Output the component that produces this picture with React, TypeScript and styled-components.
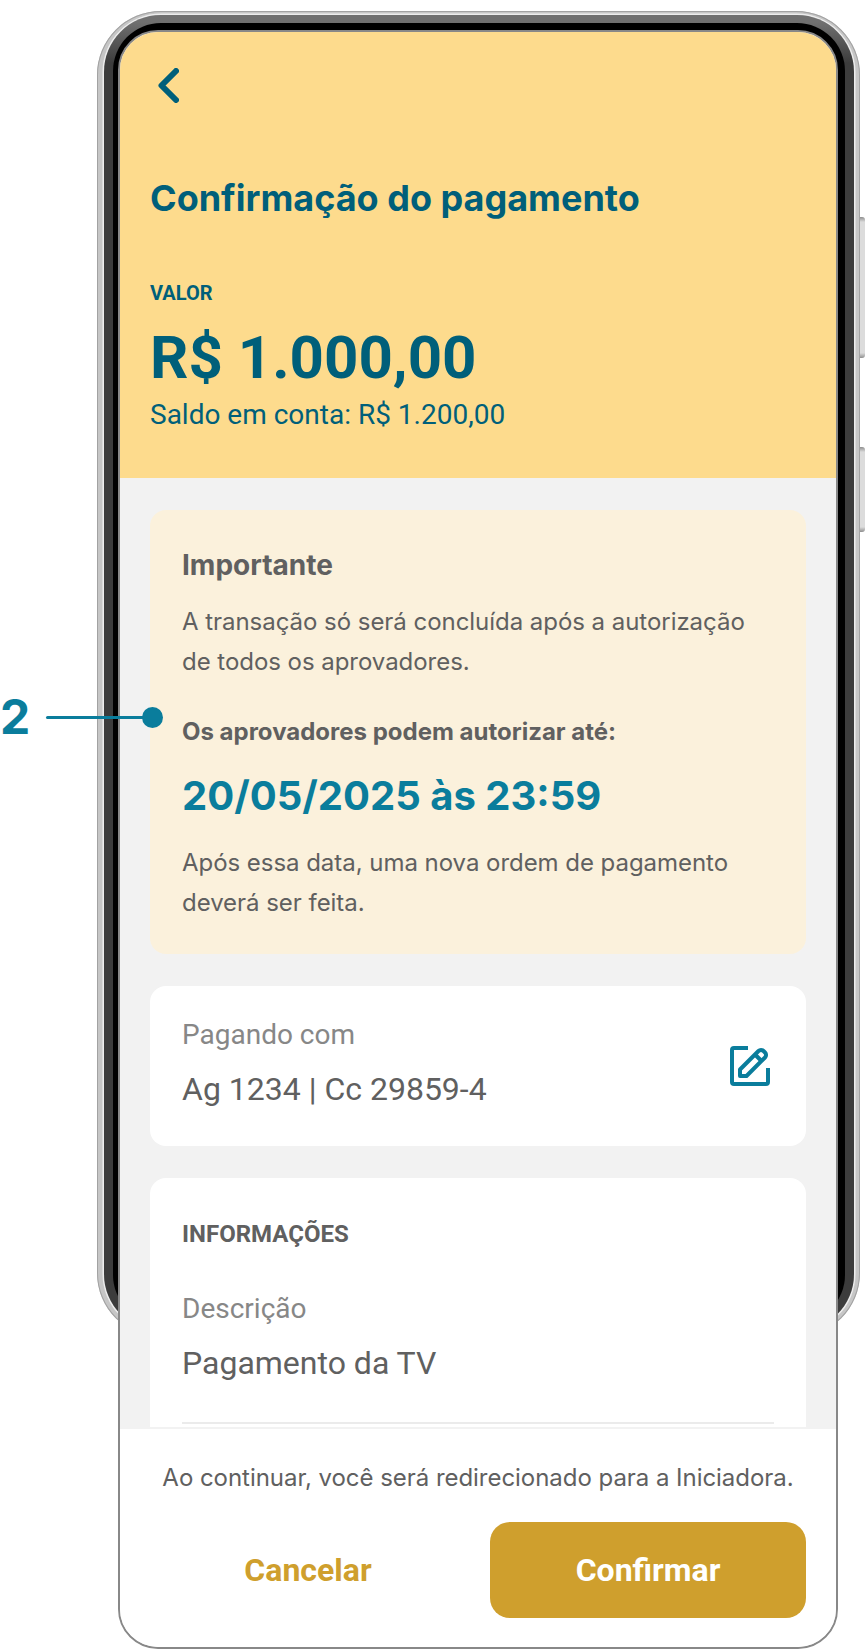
import styled, { createGlobalStyle } from 'styled-components'

const colors = {
  yellow: '#FDDB8D',
  teal: '#005F7A',
  accent: '#0A7D9C',
  gold: '#CF9F2D',
  text: '#606060',
  muted: '#878787',
  cream: '#FBF1DC',
  page: '#F2F2F2',
}

const inter = 'Inter, "Liberation Sans", sans-serif'

const GlobalStyle = createGlobalStyle`
  * { box-sizing: border-box; }
  body {
    margin: 0;
    background: #FFFFFF;
    font-family: Roboto, "Liberation Sans", sans-serif;
  }
`

const Stage = styled.div`
  position: relative;
  width: 866px;
  height: 1650px;
  padding: 30px 0 0 118px;
  overflow: hidden;
  background: #FFFFFF;
`
const PhoneShell = styled.div`
  position: absolute;
  left: 97px;
  top: 11px;
  width: 763px;
  height: 1326px;
  padding: 4px 6px 6px 7px;
  border-radius: 64px;
  background: #C6C6C6;
  box-shadow: inset 0 0 0 1px #A2A2A2;
`
const PhoneBezel = styled.div`
  height: 100%;
  padding: 8px 9px;
  border-radius: 57px;
  background: linear-gradient(180deg, #707070 0, #707070 7px, #3C3C3C 48px);
  box-shadow: 0 0 0 1.5px #EDEDED;
`
const PhoneGlass = styled.div`
  height: 100%;
  border-radius: 48px;
  background: #000000;
`
const SideButton = styled.div<{ $top: number; $height: number }>`
  position: absolute;
  left: 860px;
  top: ${(p) => p.$top}px;
  width: 5px;
  height: ${(p) => p.$height}px;
  border-radius: 0 3px 3px 0;
  background: linear-gradient(180deg, #8E8E8E 0, #DCDCDC 5px, #DCDCDC calc(100% - 5px), #8E8E8E 100%);
`
const Screen = styled.div`
  position: relative;
  display: flex;
  flex-direction: column;
  width: 720px;
  height: 1619px;
  border: 2px solid #888888;
  border-radius: 40px;
  overflow: hidden;
  background: ${colors.page};
`
const Header = styled.header`
  flex: none;
  height: 446px;
  padding: 36px 30px 0;
  background: ${colors.yellow};
  color: ${colors.teal};
`
const BackButton = styled.div`
  display: flex;
  height: 35px;
  margin-bottom: 73px;
  padding-left: 8px;
`
const PageTitle = styled.h1`
  margin: 0 0 61px;
  font-family: ${inter};
  font-size: 36px;
  line-height: 44px;
  font-weight: 700;
`
const AmountLabel = styled.div`
  font-size: 20px;
  line-height: 24px;
  font-weight: 700;
`
const Amount = styled.div`
  margin-top: 21px;
  font-size: 60px;
  line-height: 64px;
  font-weight: 700;
`
const Balance = styled.div`
  margin-top: 9px;
  font-size: 28px;
  line-height: 32px;
`
const Content = styled.main`
  flex: 1;
  min-height: 0;
  overflow: hidden;
  padding: 32px 30px 0;
  display: flex;
  flex-direction: column;
  gap: 32px;
`
const Notice = styled.section`
  flex: none;
  height: 444px;
  padding: 37px 32px 0;
  border-radius: 16px;
  background: ${colors.cream};
  color: ${colors.text};
`
const NoticeTitle = styled.h2`
  margin: 0 0 19px;
  font-family: ${inter};
  font-size: 28px;
  line-height: 36px;
  font-weight: 700;
`
const NoticeText = styled.p`
  margin: 0;
  font-family: ${inter};
  font-size: 24px;
  line-height: 40px;
  letter-spacing: -0.04px;
`
const NoticeStrong = styled.p`
  margin: 34px 0 0;
  font-family: ${inter};
  font-size: 24px;
  line-height: 32px;
  font-weight: 700;
`
const Deadline = styled.div`
  margin: 24px 0 23px;
  font-family: ${inter};
  font-size: 40px;
  line-height: 48px;
  font-weight: 700;
  color: ${colors.accent};
`
const Card = styled.section`
  flex: none;
  padding: 38px 32px 32px;
  border-radius: 16px;
  background: #FFFFFF;
`
const AccountCard = styled(Card)`
  display: flex;
  align-items: center;
  justify-content: space-between;
  height: 160px;
  padding: 0 36px 0 32px;
`
const AccountInfo = styled.div`
  margin-bottom: 6px;
`
const FieldLabel = styled.div`
  font-size: 28px;
  line-height: 36px;
  color: ${colors.muted};
`
const FieldValue = styled.div`
  margin-top: 16px;
  font-size: 32px;
  line-height: 40px;
  color: ${colors.text};
`
const SectionTitle = styled.h3`
  margin: 0 0 39px;
  font-size: 24px;
  line-height: 36px;
  font-weight: 700;
  color: ${colors.text};
`
const Divider = styled.hr`
  margin: 39px 0 0;
  border: 0;
  border-top: 2px solid #EBEBEB;
`
const Footer = styled.footer`
  flex: none;
  height: 220px;
  padding: 33px 30px 0;
  border-top: 2px solid #F2F2F2;
  background: #FFFFFF;
`
const FooterText = styled.p`
  margin: 0;
  font-family: ${inter};
  font-size: 24px;
  line-height: 32px;
  letter-spacing: -0.04px;
  text-align: center;
  color: ${colors.text};
`
const FooterActions = styled.div`
  display: grid;
  grid-template-columns: 1fr 1fr;
  gap: 24px;
  margin-top: 28px;
`
const ActionButton = styled.button<{ $primary?: boolean }>`
  height: 96px;
  border: 0;
  border-radius: 20px;
  font-family: inherit;
  font-size: 32px;
  font-weight: 700;
  color: ${(p) => (p.$primary ? '#FFFFFF' : colors.gold)};
  background: ${(p) => (p.$primary ? colors.gold : 'transparent')};
`
const Callout = styled.div`
  position: absolute;
  left: 0;
  top: 687px;
  display: flex;
  align-items: center;
  height: 60px;
`
const CalloutNumber = styled.span`
  width: 46px;
  font-family: ${inter};
  font-size: 48px;
  line-height: 60px;
  font-weight: 700;
  color: ${colors.accent};
`
const CalloutLine = styled.span`
  width: 100px;
  height: 3px;
  border-radius: 2px;
  background: ${colors.accent};
`
const CalloutDot = styled.span`
  width: 21px;
  height: 21px;
  margin-left: -4px;
  border-radius: 50%;
  background: ${colors.accent};
`

function BackIcon() {
  return (
    <svg width="21" height="35" viewBox="0 0 21 35" fill="none">
      <path d="M18 3 3.5 17.5 18 32" stroke={colors.teal} strokeWidth="6" strokeLinecap="round" strokeLinejoin="round" />
    </svg>
  )
}

function EditIcon() {
  return (
    <svg width="40" height="40" viewBox="0 0 40 40" fill="none" stroke={colors.accent} strokeWidth="4">
      <path d="M18 2H4a2 2 0 0 0-2 2v32a2 2 0 0 0 2 2h32a2 2 0 0 0 2-2V22" />
      <path d="M10 30v-6.5L28.5 5a3.5 3.5 0 0 1 5 0l1.5 1.5a3.5 3.5 0 0 1 0 5L16.5 30Z" strokeLinejoin="round" />
      <path d="m25 8.5 6.5 6.5" />
    </svg>
  )
}

export default function App() {
  return (
    <Stage>
      <GlobalStyle />
      <PhoneShell>
        <PhoneBezel>
          <PhoneGlass />
        </PhoneBezel>
      </PhoneShell>
      <SideButton $top={217} $height={141} />
      <SideButton $top={447} $height={85} />
      <Screen>
        <Header>
          <BackButton><BackIcon /></BackButton>
          <PageTitle>Confirmação do pagamento</PageTitle>
          <AmountLabel>VALOR</AmountLabel>
          <Amount>R$ 1.000,00</Amount>
          <Balance>Saldo em conta: R$ 1.200,00</Balance>
        </Header>
        <Content>
          <Notice>
            <NoticeTitle>Importante</NoticeTitle>
            <NoticeText>A transação só será concluída após a autorização de todos os aprovadores.</NoticeText>
            <NoticeStrong>Os aprovadores podem autorizar até:</NoticeStrong>
            <Deadline>20/05/2025 às 23:59</Deadline>
            <NoticeText>Após essa data, uma nova ordem de pagamento deverá ser feita.</NoticeText>
          </Notice>
          <AccountCard>
            <AccountInfo>
              <FieldLabel>Pagando com</FieldLabel>
              <FieldValue>Ag 1234 | Cc 29859-4</FieldValue>
            </AccountInfo>
            <EditIcon />
          </AccountCard>
          <Card>
            <SectionTitle>INFORMAÇÕES</SectionTitle>
            <FieldLabel>Descrição</FieldLabel>
            <FieldValue>Pagamento da TV</FieldValue>
            <Divider />
          </Card>
        </Content>
        <Footer>
          <FooterText>Ao continuar, você será redirecionado para a Iniciadora.</FooterText>
          <FooterActions>
            <ActionButton>Cancelar</ActionButton>
            <ActionButton $primary>Confirmar</ActionButton>
          </FooterActions>
        </Footer>
      </Screen>
      <Callout>
        <CalloutNumber>2</CalloutNumber>
        <CalloutLine />
        <CalloutDot />
      </Callout>
    </Stage>
  )
}
